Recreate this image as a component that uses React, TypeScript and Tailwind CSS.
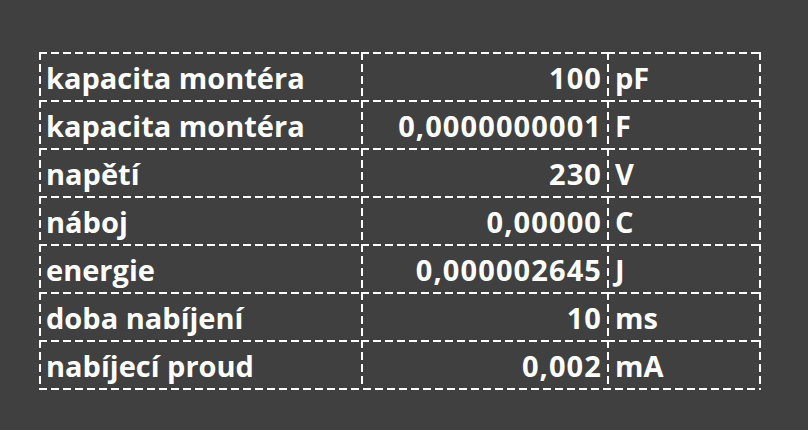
import React from "react";

const rows: [string, string, string][] = [
  ["kapacita montéra", "100", "pF"],
  ["kapacita montéra", "0,0000000001", "F"],
  ["napětí", "230", "V"],
  ["náboj", "0,00000", "C"],
  ["energie", "0,000002645", "J"],
  ["doba nabíjení", "10", "ms"],
  ["nabíjecí proud", "0,002", "mA"],
];

const lines =
  "bg-no-repeat [background-image:repeating-linear-gradient(90deg,#fff_0_8px,transparent_8px_12px),repeating-linear-gradient(180deg,#fff_0_8px,transparent_8px_12px)] [background-size:100%_2px,2px_100%]";

export default function App() {
  return (
    <div className="w-[808px] h-[430px] bg-[#404040] pt-[52px] pl-[39px]">
      <div
        className="inline-grid grid-cols-[322px_246px_152px] pr-[2px] pb-[2px] text-white font-bold text-[29px] leading-none bg-no-repeat [background-image:repeating-linear-gradient(180deg,#fff_0_8px,transparent_8px_12px),repeating-linear-gradient(90deg,#fff_0_8px,transparent_8px_12px)] [background-size:2px_100%,100%_2px] [background-position:right_top,left_bottom]"
        style={{ fontFamily: '"Open Sans", "Liberation Sans", sans-serif' }}
      >
        {rows.map((r, i) => (
          <React.Fragment key={i}>
            <div className={`h-[48px] flex items-center pl-[7px] pt-[2px] ${lines}`}>{r[0]}</div>
            <div className={`h-[48px] flex items-center justify-end pr-[5px] pt-[2px] tracking-[1.1px] ${lines}`}>{r[1]}</div>
            <div className={`h-[48px] flex items-center pl-[8px] pt-[2px] ${lines}`}>{r[2]}</div>
          </React.Fragment>
        ))}
      </div>
    </div>
  );
}
